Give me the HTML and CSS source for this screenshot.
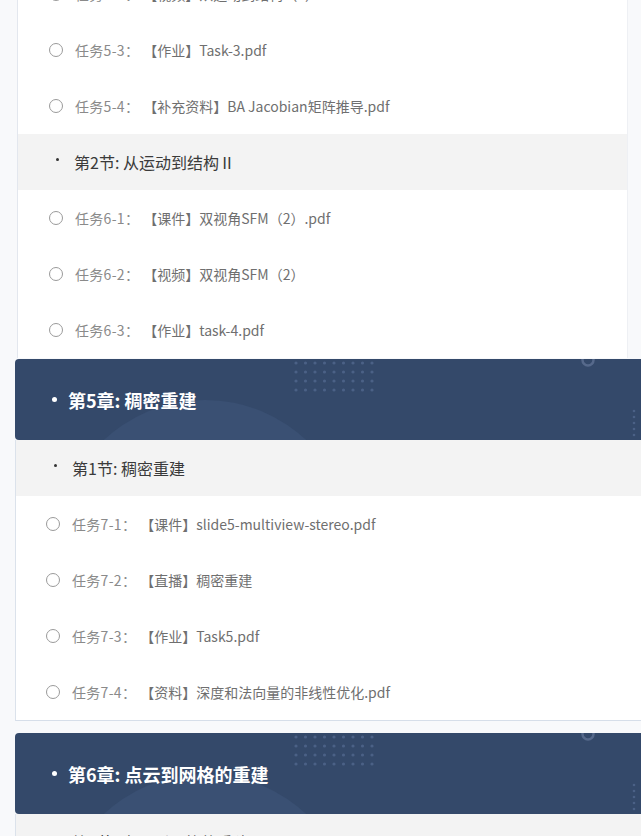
FILE: index.html
```html
<!DOCTYPE html>
<html lang="zh-CN">
<head>
<meta charset="utf-8">
<title>课程目录</title>
<link rel="stylesheet" href="styles.css">
</head>
<body>
<div class="page">
  <div class="card-prev">
    <div class="task"><span class="radio"></span><span class="tno">任务5-2：</span><span class="tname">【视频】从运动到结构（1）</span></div>
    <div class="task"><span class="radio"></span><span class="tno">任务5-3：</span><span class="tname">【作业】Task-3.pdf</span></div>
    <div class="task"><span class="radio"></span><span class="tno">任务5-4：</span><span class="tname">【补充资料】BA Jacobian矩阵推导.pdf</span></div>
    <div class="section"><span class="sdot"></span><span>第2节: 从运动到结构Ⅱ</span></div>
    <div class="task"><span class="radio"></span><span class="tno">任务6-1：</span><span class="tname">【课件】双视角SFM（2）.pdf</span></div>
    <div class="task"><span class="radio"></span><span class="tno">任务6-2：</span><span class="tname">【视频】双视角SFM（2）</span></div>
    <div class="task"><span class="radio"></span><span class="tno">任务6-3：</span><span class="tname">【作业】task-4.pdf</span></div>
  </div>

  <div class="chapter-block first">
    <div class="chapter">
      <svg class="deco" width="640" height="81" viewBox="0 0 640 81" aria-hidden="true">
        <circle cx="190" cy="189" r="148" fill="#3a5073"/>
        <g fill="#4b6186">
          <circle cx="281" cy="4" r="1.6"/><circle cx="290.5" cy="4" r="1.6"/><circle cx="300" cy="4" r="1.6"/><circle cx="309.5" cy="4" r="1.6"/><circle cx="319" cy="4" r="1.6"/><circle cx="328.5" cy="4" r="1.6"/><circle cx="338" cy="4" r="1.6"/><circle cx="347.5" cy="4" r="1.6"/><circle cx="357" cy="4" r="1.6"/>
          <circle cx="281" cy="13" r="1.6"/><circle cx="290.5" cy="13" r="1.6"/><circle cx="300" cy="13" r="1.6"/><circle cx="309.5" cy="13" r="1.6"/><circle cx="319" cy="13" r="1.6"/><circle cx="328.5" cy="13" r="1.6"/><circle cx="338" cy="13" r="1.6"/><circle cx="347.5" cy="13" r="1.6"/><circle cx="357" cy="13" r="1.6"/>
          <circle cx="281" cy="22" r="1.6"/><circle cx="290.5" cy="22" r="1.6"/><circle cx="300" cy="22" r="1.6"/><circle cx="309.5" cy="22" r="1.6"/><circle cx="319" cy="22" r="1.6"/><circle cx="328.5" cy="22" r="1.6"/><circle cx="338" cy="22" r="1.6"/><circle cx="347.5" cy="22" r="1.6"/><circle cx="357" cy="22" r="1.6"/>
          <circle cx="281" cy="31" r="1.6"/><circle cx="290.5" cy="31" r="1.6"/><circle cx="300" cy="31" r="1.6"/><circle cx="309.5" cy="31" r="1.6"/><circle cx="319" cy="31" r="1.6"/><circle cx="328.5" cy="31" r="1.6"/><circle cx="338" cy="31" r="1.6"/><circle cx="347.5" cy="31" r="1.6"/><circle cx="357" cy="31" r="1.6"/>
          <circle cx="619" cy="52" r="1.3"/><circle cx="619" cy="58" r="1.3"/><circle cx="619" cy="64" r="1.3"/><circle cx="619" cy="70" r="1.3"/><circle cx="619" cy="76" r="1.3"/>
        </g>
        <circle cx="573" cy="1" r="5.5" fill="none" stroke="#56698b" stroke-width="2.5"/>
      </svg>
      <span class="cdot"></span><span class="ctitle">第5章: 稠密重建</span>
    </div>
    <div class="chapter-body">
      <div class="section"><span class="sdot"></span><span>第1节: 稠密重建</span></div>
      <div class="task"><span class="radio"></span><span class="tno">任务7-1：</span><span class="tname">【课件】slide5-multiview-stereo.pdf</span></div>
      <div class="task"><span class="radio"></span><span class="tno">任务7-2：</span><span class="tname">【直播】稠密重建</span></div>
      <div class="task"><span class="radio"></span><span class="tno">任务7-3：</span><span class="tname">【作业】Task5.pdf</span></div>
      <div class="task"><span class="radio"></span><span class="tno">任务7-4：</span><span class="tname">【资料】深度和法向量的非线性优化.pdf</span></div>
    </div>
  </div>

  <div class="chapter-block">
    <div class="chapter">
      <svg class="deco" width="640" height="81" viewBox="0 0 640 81" aria-hidden="true">
        <circle cx="190" cy="189" r="148" fill="#3a5073"/>
        <g fill="#4b6186">
          <circle cx="281" cy="4" r="1.6"/><circle cx="290.5" cy="4" r="1.6"/><circle cx="300" cy="4" r="1.6"/><circle cx="309.5" cy="4" r="1.6"/><circle cx="319" cy="4" r="1.6"/><circle cx="328.5" cy="4" r="1.6"/><circle cx="338" cy="4" r="1.6"/><circle cx="347.5" cy="4" r="1.6"/><circle cx="357" cy="4" r="1.6"/>
          <circle cx="281" cy="13" r="1.6"/><circle cx="290.5" cy="13" r="1.6"/><circle cx="300" cy="13" r="1.6"/><circle cx="309.5" cy="13" r="1.6"/><circle cx="319" cy="13" r="1.6"/><circle cx="328.5" cy="13" r="1.6"/><circle cx="338" cy="13" r="1.6"/><circle cx="347.5" cy="13" r="1.6"/><circle cx="357" cy="13" r="1.6"/>
          <circle cx="281" cy="22" r="1.6"/><circle cx="290.5" cy="22" r="1.6"/><circle cx="300" cy="22" r="1.6"/><circle cx="309.5" cy="22" r="1.6"/><circle cx="319" cy="22" r="1.6"/><circle cx="328.5" cy="22" r="1.6"/><circle cx="338" cy="22" r="1.6"/><circle cx="347.5" cy="22" r="1.6"/><circle cx="357" cy="22" r="1.6"/>
          <circle cx="281" cy="31" r="1.6"/><circle cx="290.5" cy="31" r="1.6"/><circle cx="300" cy="31" r="1.6"/><circle cx="309.5" cy="31" r="1.6"/><circle cx="319" cy="31" r="1.6"/><circle cx="328.5" cy="31" r="1.6"/><circle cx="338" cy="31" r="1.6"/><circle cx="347.5" cy="31" r="1.6"/><circle cx="357" cy="31" r="1.6"/>
          <circle cx="619" cy="52" r="1.3"/><circle cx="619" cy="58" r="1.3"/><circle cx="619" cy="64" r="1.3"/><circle cx="619" cy="70" r="1.3"/><circle cx="619" cy="76" r="1.3"/>
        </g>
        <circle cx="573" cy="1" r="5.5" fill="none" stroke="#56698b" stroke-width="2.5"/>
      </svg>
      <span class="cdot"></span><span class="ctitle">第6章: 点云到网格的重建</span>
    </div>
    <div class="chapter-body">
      <div class="section"><span class="sdot"></span><span>第1节: 点云到网格的重建</span></div>
    </div>
  </div>
</div>
</body>
</html>
```

FILE: styles.css
```css
html, body {
  margin: 0;
  padding: 0;
  overflow: hidden;
  background: #f8f9fb;
  font-family: "Noto Sans CJK SC", "Microsoft YaHei", "Noto Sans", sans-serif;
}

.page {
  width: 641px;
  height: 836px;
  overflow: hidden;
}

/* previous chapter card (partially scrolled) */
.card-prev {
  margin-top: -34px;
  margin-left: 17px;
  width: 609px;
  background: #fff;
  border-left: 1px solid #e3e7ee;
  border-right: 1px solid #eef0f4;
}

.task {
  height: 56px;
  display: flex;
  align-items: center;
  font-size: 14px;
  line-height: 20px;
}

.card-prev .task {
  padding-left: 31px;
}

.radio {
  width: 12px;
  height: 12px;
  border: 1px solid #9a9a9a;
  border-radius: 50%;
  background: #fff;
  flex: 0 0 auto;
  margin-right: 12px;
}

.tno {
  color: #8a8a8a;
  margin-right: 4px;
  letter-spacing: 0.3px;
}

.tname {
  color: #6f6f6f;
}

.section {
  height: 56px;
  display: flex;
  align-items: center;
  background: #f3f3f3;
  font-size: 16px;
  line-height: 22px;
  color: #3a3a3a;
}

.card-prev .section {
  padding-left: 38px;
}

.sdot {
  width: 3px;
  height: 3px;
  border-radius: 50%;
  background: #333;
  margin-right: 15px;
  margin-top: -6px;
  flex: 0 0 auto;
}

/* chapter blocks */
.chapter-block {
  margin-left: 15px;
  width: 640px;
}

.chapter-block.first {
  margin-top: 1px;
}

.chapter-block + .chapter-block {
  margin-top: 12px;
}

.chapter {
  position: relative;
  height: 81px;
  display: flex;
  align-items: center;
  padding-left: 37px;
  background: #34496a;
  border-radius: 4px 0 0 4px;
  overflow: hidden;
  color: #fff;
}

.deco {
  position: absolute;
  left: 0;
  top: 0;
  display: block;
}

.cdot {
  position: relative;
  width: 5px;
  height: 5px;
  border-radius: 50%;
  background: #fff;
  margin-right: 11px;
  flex: 0 0 auto;
}

.ctitle {
  position: relative;
  font-size: 18px;
  font-weight: 700;
  line-height: 24px;
}

.chapter-body {
  background: #fff;
  border-left: 1px solid #dbe2eb;
  border-bottom: 1px solid #d6dee9;
}

.chapter-body .section {
  padding-left: 38px;
}

.chapter-body .task {
  padding-left: 30px;
}
```
